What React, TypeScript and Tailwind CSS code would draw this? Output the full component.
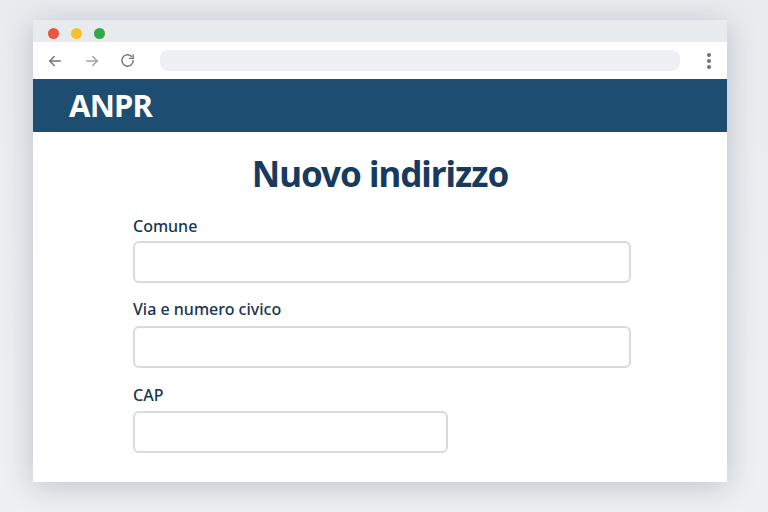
import React from "react";

export default function App() {
  return (
    <div
      className="w-[768px] h-[512px] overflow-hidden bg-gradient-to-b from-[#e9ecef] to-[#eef0f2] flex"
      style={{ fontFamily: '"Noto Sans", "Open Sans", sans-serif' }}
    >
      <div className="ml-[33px] mt-[20px] w-[694px] h-[462px] flex flex-col rounded-t-[6px] shadow-[0_4px_30px_rgba(60,80,110,0.28)] bg-white">
        {/* tab strip */}
        <div className="h-[22px] bg-[#e8ebee] flex items-center pl-[15px] gap-[12px] pt-[4px]">
          <div className="w-[11px] h-[11px] rounded-full bg-[#e9553f]" />
          <div className="w-[11px] h-[11px] rounded-full bg-[#f4c12f]" />
          <div className="w-[11px] h-[11px] rounded-full bg-[#2fa84a]" />
        </div>
        {/* toolbar */}
        <div className="h-[37px] bg-white flex items-center pl-[13px] pr-[16px]">
          <svg width="18" height="18" viewBox="0 0 24 24" fill="none" stroke="#6b7280" strokeWidth="1.8" strokeLinecap="round" strokeLinejoin="round">
            <path d="M19 12H5" />
            <path d="M11 6l-6 6 6 6" />
          </svg>
          <svg className="ml-[19px]" width="18" height="18" viewBox="0 0 24 24" fill="none" stroke="#9ca3af" strokeWidth="1.8" strokeLinecap="round" strokeLinejoin="round">
            <path d="M5 12h14" />
            <path d="M13 6l6 6-6 6" />
          </svg>
          <svg className="ml-[18px]" width="17" height="17" viewBox="0 0 24 24" fill="none" stroke="#6b7280" strokeWidth="2" strokeLinecap="round" strokeLinejoin="round">
            <path d="M20 12a8 8 0 1 1-2.6-5.9" />
            <path d="M20 4v5h-5" />
          </svg>
          <div className="ml-[24px] w-[520px] h-[21px] rounded-[8px] bg-[#eef0f3]" />
          <div className="ml-auto flex flex-col gap-[2px] items-center">
            <div className="w-[4px] h-[4px] rounded-full bg-[#6b7280]" />
            <div className="w-[4px] h-[4px] rounded-full bg-[#6b7280]" />
            <div className="w-[4px] h-[4px] rounded-full bg-[#6b7280]" />
          </div>
        </div>
        {/* header */}
        <div className="h-[53px] bg-[#1e4d72] flex items-center pl-[36px]">
          <span className="text-white text-[31px] font-bold tracking-[-0.8px] leading-none">ANPR</span>
        </div>
        {/* content */}
        <div className="flex-1 bg-white flex flex-col px-[100px] pt-[20px]">
          <h1 className="text-center text-[35px] font-bold text-[#173b5f] leading-[44px] tracking-[-1px]">
            Nuovo indirizzo
          </h1>
          <div className="mt-[20px] text-[16px] font-medium text-[#173550] leading-[20px]">Comune</div>
          <div className="mt-[5px] w-[498px] h-[42px] rounded-[6px] border-2 border-[#d6dbe0] bg-white" />
          <div className="mt-[16px] text-[16px] font-medium text-[#173550] leading-[20px]">Via e numero civico</div>
          <div className="mt-[7px] w-[498px] h-[42px] rounded-[6px] border-2 border-[#d6dbe0] bg-white" />
          <div className="mt-[17px] text-[16px] font-medium text-[#173550] leading-[20px]">CAP</div>
          <div className="mt-[6px] w-[315px] h-[42px] rounded-[6px] border-2 border-[#d6dbe0] bg-white" />
        </div>
      </div>
    </div>
  );
}
